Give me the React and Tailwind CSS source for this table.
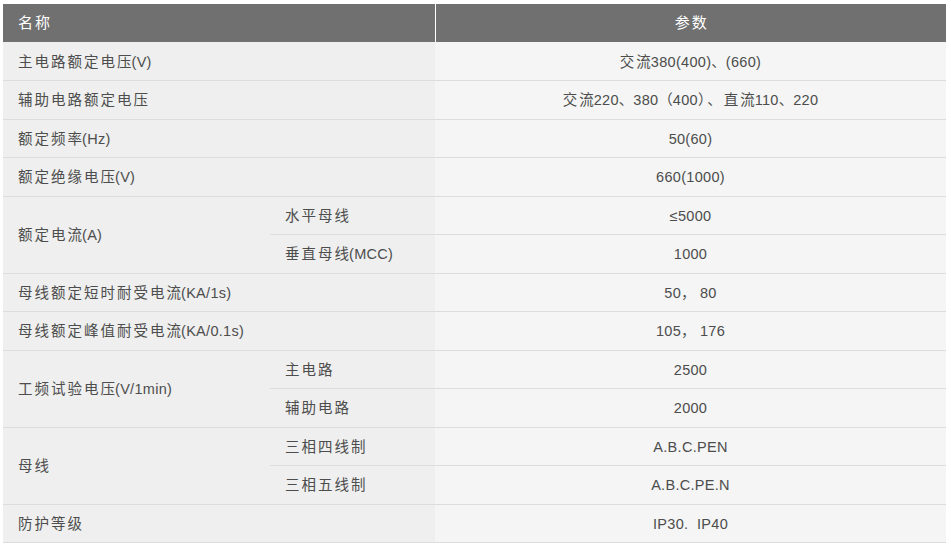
const rows = [
  { name: '主电路额定电压(V)', value: '交流380(400)、(660)' },
  { name: '辅助电路额定电压', value: '交流220、380（400）、直流110、220' },
  { name: '额定频率(Hz)', value: '50(60)' },
  { name: '额定绝缘电压(V)', value: '660(1000)' },
  {
    name: '额定电流(A)',
    subs: [
      { sub: '水平母线', value: '≤5000' },
      { sub: '垂直母线(MCC)', value: '1000' },
    ],
  },
  { name: '母线额定短时耐受电流(KA/1s)', value: '50， 80' },
  { name: '母线额定峰值耐受电流(KA/0.1s)', value: '105， 176' },
  {
    name: '工频试验电压(V/1min)',
    subs: [
      { sub: '主电路', value: '2500' },
      { sub: '辅助电路', value: '2000' },
    ],
  },
  {
    name: '母线',
    subs: [
      { sub: '三相四线制', value: 'A.B.C.PEN' },
      { sub: '三相五线制', value: 'A.B.C.PE.N' },
    ],
  },
  { name: '防护等级', value: 'IP30.  IP40' },
]

// CJK glyphs in the shot sit on a wider advance than the latin ones,
// so space out every CJK char except the last one of a run
function Txt({ children }) {
  const parts = children.split(/([\u3000-\u303f\u4e00-\u9fff\uff00-\uffef]+)/)
  return parts.map((p, i) =>
    i % 2 ? (
      <span key={i}>
        <span className="tracking-[2px]">{p.slice(0, -1)}</span>
        {p.slice(-1)}
      </span>
    ) : (
      <span key={i} className="whitespace-pre tracking-[0.3px]">{p}</span>
    )
  )
}

const cell = 'h-[38.5px] border-b border-[#dcdddc] p-0 pt-[3px] align-middle'

export default function App() {
  return (
    <div className="bg-white w-[951px] h-[548px] pl-[3px] pt-[4px] font-['Liberation_Sans','Noto_Sans_CJK_SC',sans-serif] text-[14.5px] text-[#4d4d4d]">
      <table className="w-[943px] border-collapse table-fixed">
        <colgroup>
          <col className="w-[267px]" />
          <col className="w-[165px]" />
          <col className="w-[511px]" />
        </colgroup>
        <thead>
          <tr className="bg-[#707070] text-white text-[15px]">
            <th colSpan={2} className="h-[38px] p-0 pt-[1px] pl-[15px] text-left font-normal border-r border-white"><Txt>名称</Txt></th>
            <th className="h-[38px] p-0 pt-[1px] text-center font-normal"><Txt>参数</Txt></th>
          </tr>
        </thead>
        <tbody>
          {rows.map((r) =>
            r.subs ? (
              r.subs.map((s, i) => (
                <tr key={r.name + i}>
                  {i === 0 && (
                    <td rowSpan={r.subs.length} className={`${cell} bg-[#eeefee] pl-[15px]`}><Txt>{r.name}</Txt></td>
                  )}
                  <td className={`${cell} bg-[#eeefee] pl-[15px]`}><Txt>{s.sub}</Txt></td>
                  <td className={`${cell} bg-[#f4f5f4] text-center`}><Txt>{s.value}</Txt></td>
                </tr>
              ))
            ) : (
              <tr key={r.name}>
                <td colSpan={2} className={`${cell} bg-[#eeefee] pl-[15px]`}><Txt>{r.name}</Txt></td>
                <td className={`${cell} bg-[#f4f5f4] text-center`}><Txt>{r.value}</Txt></td>
              </tr>
            )
          )}
        </tbody>
      </table>
    </div>
  )
}
